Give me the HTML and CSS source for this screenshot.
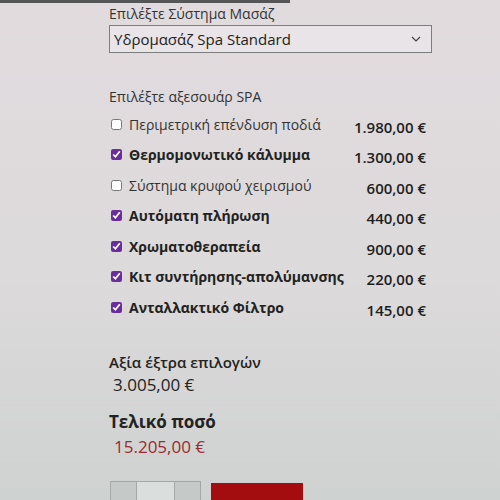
FILE: index.html
```html
<!DOCTYPE html>
<html lang="el">

<head>
  <title>Υδρομασάζ Spa</title>
  <meta name="viewport" content="width=device-width, initial-scale=1" />
  <meta charset="UTF-8" />
  <link rel="stylesheet" href="styles.css">
</head>

<body>
  <div class="topbar"></div>
  <form class="config">
    <label class="field-label" for="system">Επιλέξτε Σύστημα Μασάζ</label>
    <div class="select-wrap">
      <select id="system" class="select">
        <option>Υδρομασάζ Spa Standard</option>
      </select>
      <svg class="chevron" width="10" height="6" viewBox="0 0 10 6">
        <path d="M1 1 L5 5 L9 1" fill="none" stroke="#444" stroke-width="1.2" />
      </svg>
    </div>

    <h4 class="section-label">Επιλέξτε αξεσουάρ SPA</h4>
    <ul class="extras">
      <li><label><input type="checkbox"> Περιμετρική επένδυση ποδιά</label><span class="price">1.980,00 €</span></li>
      <li class="on"><label><input type="checkbox" checked> Θερμομονωτικό κάλυμμα</label><span class="price">1.300,00 €</span></li>
      <li><label><input type="checkbox"> Σύστημα κρυφού χειρισμού</label><span class="price">600,00 €</span></li>
      <li class="on"><label><input type="checkbox" checked> Αυτόματη πλήρωση</label><span class="price">440,00 €</span></li>
      <li class="on"><label><input type="checkbox" checked> Χρωματοθεραπεία</label><span class="price">900,00 €</span></li>
      <li class="on"><label><input type="checkbox" checked> Κιτ συντήρησης-απολύμανσης</label><span class="price">220,00 €</span></li>
      <li class="on"><label><input type="checkbox" checked> Ανταλλακτικό Φίλτρο</label><span class="price">145,00 €</span></li>
    </ul>

    <div class="summary">
      <div class="extra-title">Αξία έξτρα επιλογών</div>
      <div class="extra-value">3.005,00 €</div>
      <div class="total-title">Τελικό ποσό</div>
      <div class="total-value">15.205,00 €</div>
    </div>

    <div class="actions">
      <div class="qty">
        <span class="qty-btn"></span>
        <span class="qty-num"></span>
        <span class="qty-btn"></span>
      </div>
      <button type="button" class="buy"></button>
    </div>
  </form>
</body>

</html>
```

FILE: styles.css
```css
body {
  margin: 0;
  height: 500px;
  overflow: hidden;
  background: linear-gradient(#e1dbde, #dddadb 55%, #ced2d0);
  color: #222;
  font-family: 'Open Sans', sans-serif;
  font-size: 14px;
}

.topbar {
  height: 3px;
  width: 290px;
  background: #555;
}

.config {
  width: 323px;
  margin-left: 109px;
  padding-top: 1px;
}

.field-label {
  display: block;
  line-height: 20px;
  color: #333;
}

.select-wrap {
  position: relative;
  margin-top: 1px;
}

.select {
  width: 100%;
  height: 28px;
  padding: 0 0 0 4px;
  border: 1px solid #7d7d7d;
  border-radius: 0;
  background: #e9e4e7;
  font-family: 'Open Sans', sans-serif;
  font-size: 15px;
  color: #222;
  appearance: none;
}

.chevron {
  position: absolute;
  right: 11px;
  top: 11px;
}

.section-label {
  margin: 34px 0 0;
  font-weight: normal;
  font-size: 14px;
  line-height: 20px;
  color: #333;
}

.extras {
  list-style: none;
  margin: 2px 0 0;
  padding: 0;
}

.extras li {
  display: flex;
  justify-content: space-between;
  align-items: center;
  height: 30.5px;
}

.extras label {
  display: flex;
  align-items: center;
  gap: 7px;
  color: #333;
}

.extras li.on label {
  font-weight: bold;
  color: #222;
}

.extras input {
  width: 11px;
  height: 11px;
  margin: 0 0 0 2px;
  accent-color: #6b2c9c;
}

.price {
  padding: 5px 6px 0 0;
  font-size: 15px;
  font-weight: 600;
  color: #1e1e1e;
}

.summary {
  margin-top: 28px;
}

.extra-title {
  font-size: 15px;
  font-weight: 600;
  line-height: 22px;
}

.extra-value {
  font-size: 17px;
  line-height: 24px;
  padding-left: 4px;
}

.total-title {
  margin-top: 12px;
  font-size: 17px;
  font-weight: bold;
  line-height: 26px;
}

.total-value {
  font-size: 17px;
  line-height: 24px;
  padding-left: 5px;
  color: #9b2a30;
}

.actions {
  display: flex;
  gap: 10px;
  margin-top: 22px;
  padding-left: 1px;
}

.qty {
  display: flex;
  height: 28px;
  border: 1px solid #a4a8a6;
}

.qty-btn {
  width: 25px;
  background: #c5c9c7;
}

.qty-num {
  width: 37px;
  background: #dadedc;
  border-left: 1px solid #a4a8a6;
  border-right: 1px solid #a4a8a6;
}

.buy {
  width: 92px;
  height: 30px;
  margin-top: 2px;
  border: 0;
  background: #a30d10;
}
```
